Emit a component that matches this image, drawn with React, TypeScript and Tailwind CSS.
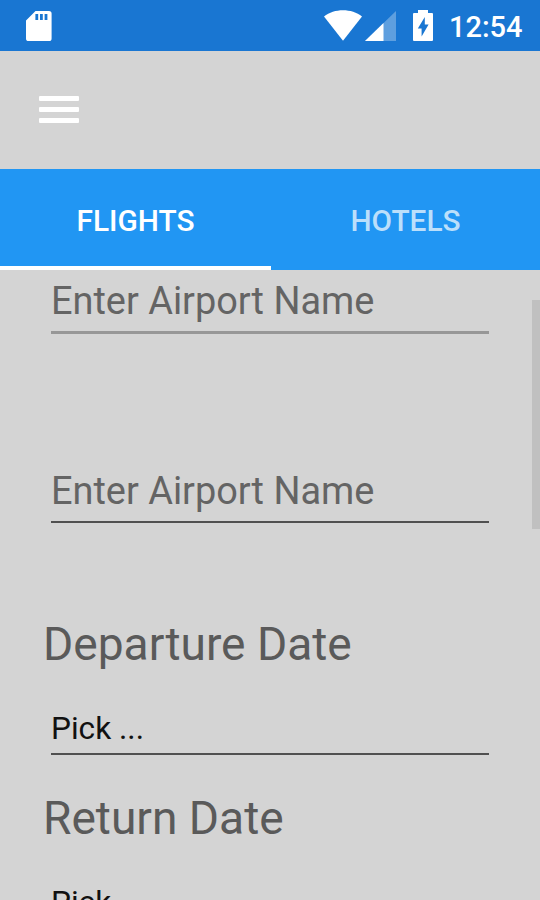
function StatusBar() {
  return (
    <div className="flex h-[51px] shrink-0 items-start bg-[#1976d2] pl-[26px] text-white">
      {/* SD card */}
      <svg className="mt-[11px] h-[30px] w-[26px]" viewBox="0 0 26 30">
        <path
          fill="currentColor"
          fillRule="evenodd"
          d="M9.5 0H23a2.6 2.6 0 0 1 2.6 2.6v24.8A2.6 2.6 0 0 1 23 30H2.6A2.6 2.6 0 0 1 0 27.4V9.5zM9.4 3v6h2.8V3zM14 3v6h2.8V3zM18.6 3v6h2.8V3z"
        />
      </svg>
      {/* Wifi */}
      <svg className="mt-[10px] ml-[272px] h-[31px] w-[38px]" viewBox="0 0 38 31">
        <path fill="currentColor" d="M19 30.8 0 6.4C5.2 2.2 12 .2 19 .2S32.8 2.2 38 6.4z" />
      </svg>
      {/* Signal */}
      <svg className="mt-[11px] ml-[3px] h-[30px] w-[31px]" viewBox="0 0 31 30">
        <path fill="currentColor" fillOpacity=".3" d="M0 30H31V0z" />
        <path fill="currentColor" d="M0 30H18.5V12.1z" />
      </svg>
      {/* Battery */}
      <svg className="mt-[10px] ml-[17px] h-[31px] w-[20px]" viewBox="0 0 20 31">
        <path
          fill="currentColor"
          fillRule="evenodd"
          d="M5 0h10v3h4a1 1 0 0 1 1 1v26a1 1 0 0 1-1 1H1a1 1 0 0 1-1-1V4a1 1 0 0 1 1-1h4zM11.8 7 4.8 18.6H8.6V26.6L15.6 14.6H11.8z"
        />
      </svg>
      <span className="mt-[3px] ml-[16px] text-[29px] leading-[48px] font-medium">12:54</span>
    </div>
  );
}

function Toolbar() {
  return (
    <div className="flex h-[118px] shrink-0 items-center pb-px pl-[39.4px]">
      <button type="button" className="flex w-[40px] flex-col gap-1.5">
        <span className="h-[5px] rounded-[1px] bg-white" />
        <span className="h-[5px] rounded-[1px] bg-white" />
        <span className="h-[5px] rounded-[1px] bg-white" />
      </button>
    </div>
  );
}

function Tabs() {
  return (
    <div className="flex h-[101px] shrink-0 bg-[#2196f3] text-[29.8px] font-medium">
      <button type="button" className="flex w-[271px] items-center justify-center border-b-4 border-white pt-[7px] text-white">
        FLIGHTS
      </button>
      <button type="button" className="flex w-[269px] items-center justify-center border-b-4 border-transparent pt-[7px] text-[#bbdffb]">
        HOTELS
      </button>
    </div>
  );
}

export default function App() {
  return (
    <div className="relative flex h-[900px] w-[540px] flex-col overflow-hidden bg-[#d4d4d4] font-['Roboto',sans-serif]">
      <StatusBar />
      <Toolbar />
      <Tabs />

      {/* Search form */}
      <div className="min-h-0 flex-1 overflow-hidden px-[51px]">
        <div className="border-b-3 border-[#979797] pt-0.5 text-[37.9px] leading-[59px] text-[#646464]">
          Enter Airport Name
        </div>
        <div className="mt-[126px] border-b-2 border-[#505050] pt-0.5 text-[37.9px] leading-[59px] text-[#646464]">
          Enter Airport Name
        </div>
        <h2 className="mt-[93px] -ml-2 text-[46.1px] leading-[56px] text-[#5a5a5a]">Departure Date</h2>
        <div className="mt-8 border-b-2 border-[#505050] text-[31.6px] leading-[49px] text-[#111111]">Pick ...</div>
        <h2 className="mt-[35px] -ml-2 text-[46.1px] leading-[56px] text-[#5a5a5a]">Return Date</h2>
        <div className="mt-8 border-b-2 border-[#505050] text-[31.6px] leading-[49px] text-[#111111]">Pick ...</div>
      </div>

      {/* Scroll thumb */}
      <div className="absolute top-[300px] right-0 h-[229px] w-[8px] bg-[#c0c0c0]" />
    </div>
  );
}
